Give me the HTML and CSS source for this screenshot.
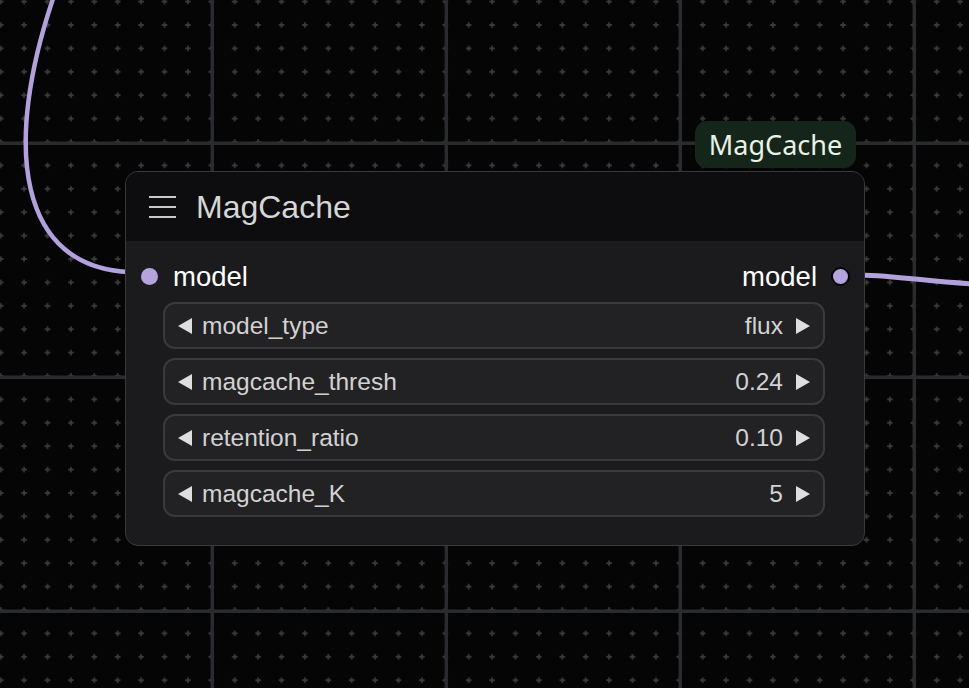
FILE: index.html
```html
<!DOCTYPE html>
<html>
<head>
<meta charset="utf-8">
<link rel="stylesheet" href="styles.css">
</head>
<body>
<div class="canvas">
  <svg class="grid" width="969" height="688" viewBox="0 0 969 688">
    <defs>
      <pattern id="dots" width="23.4" height="23.4" patternUnits="userSpaceOnUse" x="-11" y="-10.1">
        <path d="M9 11.7h5.4M11.7 9v5.4" stroke="#3a3a3b" stroke-width="1.8" fill="none"/>
      </pattern>
      <pattern id="lines" width="234" height="234" patternUnits="userSpaceOnUse" x="95" y="26">
        <path d="M117.3 0v234M0 117.3h234" stroke="#2a2b2e" stroke-width="3.4" fill="none"/>
      </pattern>
    </defs>
    <rect width="969" height="688" fill="#050505"/>
    <rect width="969" height="688" fill="url(#dots)"/>
    <rect width="969" height="688" fill="url(#lines)"/>
    <path d="M56 -10 C0 150, 20 268, 130 272" stroke="#b3a1de" stroke-width="4.5" fill="none"/>
    <path d="M860 275 C900 276, 930 282, 975 284" stroke="#b3a1de" stroke-width="5" fill="none"/>
  </svg>

  <div class="badge">MagCache</div>

  <div class="node">
    <div class="node-header">
      <svg class="menu" width="27" height="24" viewBox="0 0 27 24">
        <path d="M0 2h27M0 12h27M0 22h27" stroke="#c9c9c9" stroke-width="2.2"/>
      </svg>
      <span class="title">MagCache</span>
    </div>
    <div class="node-body">
      <div class="slots">
        <div class="slot">
          <span class="dot"></span>
          <span class="slot-label">model</span>
        </div>
        <div class="slot out">
          <span class="slot-label">model</span>
          <span class="dot dot-out"></span>
        </div>
      </div>
      <div class="widgets">
        <div class="widget">
          <span class="arrow left"></span>
          <span class="wname">model_type</span>
          <span class="wval">flux</span>
          <span class="arrow right"></span>
        </div>
        <div class="widget">
          <span class="arrow left"></span>
          <span class="wname">magcache_thresh</span>
          <span class="wval">0.24</span>
          <span class="arrow right"></span>
        </div>
        <div class="widget">
          <span class="arrow left"></span>
          <span class="wname">retention_ratio</span>
          <span class="wval">0.10</span>
          <span class="arrow right"></span>
        </div>
        <div class="widget">
          <span class="arrow left"></span>
          <span class="wname">magcache_K</span>
          <span class="wval">5</span>
          <span class="arrow right"></span>
        </div>
      </div>
    </div>
  </div>
</div>
</body>
</html>
```

FILE: styles.css
```css
html, body {
  margin: 0;
  padding: 0;
  background: #050505;
  overflow: hidden;
}

.canvas {
  position: relative;
  width: 969px;
  height: 688px;
  overflow: hidden;
  font-family: "Liberation Sans", Arial, sans-serif;
}

.grid {
  position: absolute;
  left: 0;
  top: 0;
  display: block;
}

.badge {
  position: absolute;
  left: 695px;
  top: 121px;
  width: 161px;
  height: 47px;
  box-sizing: border-box;
  background: #16251a;
  border-radius: 12px;
  color: #e6f3e6;
  font-family: "Noto Sans", "Open Sans", sans-serif;
  font-size: 27px;
  display: flex;
  align-items: center;
  justify-content: center;
  padding-bottom: 1px;
}

.node {
  position: absolute;
  left: 125px;
  top: 171px;
  width: 740px;
  height: 375px;
  box-sizing: border-box;
  border: 1px solid #39393c;
  border-radius: 13px;
  background: #1b1b1d;
  overflow: hidden;
  display: flex;
  flex-direction: column;
}

.node-header {
  height: 69px;
  flex: none;
  background: #0d0d0f;
  display: flex;
  align-items: center;
  padding-left: 23px;
  box-sizing: border-box;
}

.menu {
  display: block;
  margin-top: 1px;
}

.title {
  margin-left: 20px;
  color: #d6d6d6;
  font-size: 32px;
  line-height: 1;
  margin-top: 1px;
}

.node-body {
  display: flex;
  flex-direction: column;
  padding: 10px 39px 0 15px;
}

.slots {
  height: 51px;
  display: flex;
  justify-content: space-between;
  align-items: center;
  margin-right: -39px;
  padding-right: 14px;
}

.slot {
  display: flex;
  align-items: center;
}

.dot {
  width: 17px;
  height: 17px;
  border-radius: 50%;
  background: #b5a3df;
  display: block;
  box-sizing: border-box;
}

.dot-out {
  width: 19px;
  height: 19px;
  border: 2px solid #000;
  margin-left: 14px;
}

.slot .slot-label {
  color: #ffffff;
  font-size: 27.5px;
  line-height: 1;
  margin-left: 15px;
}

.slot.out .slot-label {
  margin-left: 0;
}

.widgets {
  display: flex;
  flex-direction: column;
  gap: 9px;
  margin-left: 22px;
}

.widget {
  height: 47px;
  box-sizing: border-box;
  border: 2px solid #3a3a3d;
  border-radius: 12px;
  background: #222225;
  display: flex;
  align-items: center;
  padding: 0 13px;
  color: #d2d2d2;
  font-size: 24.5px;
}

.wname {
  margin-left: 10px;
  flex: 1;
}

.wval {
  margin-right: 13px;
}

.arrow {
  width: 0;
  height: 0;
  border-top: 8px solid transparent;
  border-bottom: 8px solid transparent;
}

.arrow.left {
  border-right: 14px solid #dedede;
}

.arrow.right {
  border-left: 14px solid #dedede;
}
```
